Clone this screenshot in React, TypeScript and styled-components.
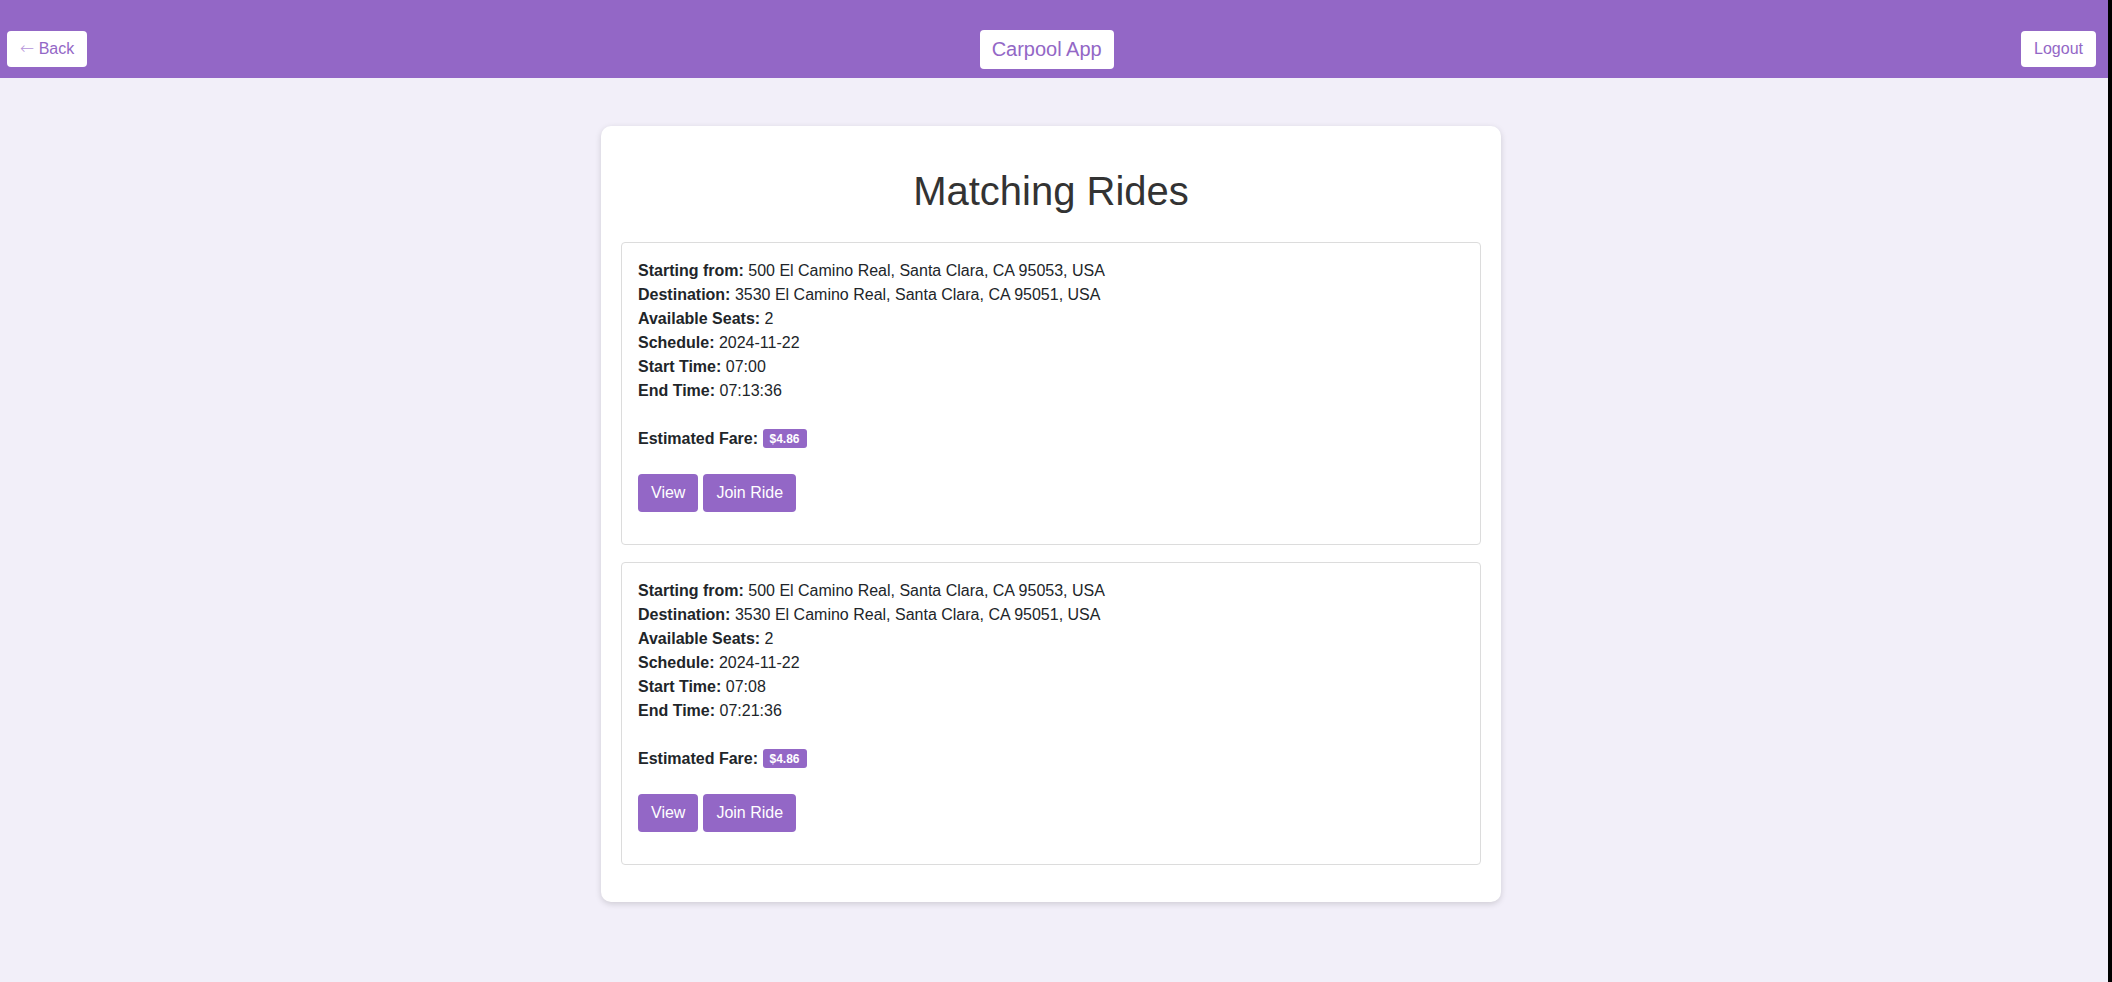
import React from "react";
import styled, { createGlobalStyle } from "styled-components";

const purple = "#9367c6";

// マッチした乗車
const rides = [
  {
    from: "500 El Camino Real, Santa Clara, CA 95053, USA",
    to: "3530 El Camino Real, Santa Clara, CA 95051, USA",
    seats: 2,
    schedule: "2024-11-22",
    start: "07:00",
    end: "07:13:36",
    fare: "$4.86",
  },
  {
    from: "500 El Camino Real, Santa Clara, CA 95053, USA",
    to: "3530 El Camino Real, Santa Clara, CA 95051, USA",
    seats: 2,
    schedule: "2024-11-22",
    start: "07:08",
    end: "07:21:36",
    fare: "$4.86",
  },
];

const GlobalStyle = createGlobalStyle`
  html, body {
    margin: 0;
    padding: 0;
    background: #000;
  }
  body {
    font-family: "Liberation Sans", Arial, sans-serif;
    color: #212529;
  }
`;

export default function App() {
  return (
    <>
      <GlobalStyle />
      <Page>
        <NavBar>
          <NavButton>
            <Arrow>←</Arrow> Back
          </NavButton>
          <BrandButton>Carpool App</BrandButton>
          <NavButton>Logout</NavButton>
        </NavBar>

        <Card>
          <Title>Matching Rides</Title>
          {rides.map((r, index) => (
            <RideCard key={index}>
              <Line>
                <b>Starting from:</b> {r.from}
              </Line>
              <Line>
                <b>Destination:</b> {r.to}
              </Line>
              <Line>
                <b>Available Seats:</b> {r.seats}
              </Line>
              <Line>
                <b>Schedule:</b> {r.schedule}
              </Line>
              <Line>
                <b>Start Time:</b> {r.start}
              </Line>
              <Line>
                <b>End Time:</b> {r.end}
              </Line>
              <Fare>
                <b>Estimated Fare:</b> <Badge>{r.fare}</Badge>
              </Fare>
              <ButtonRow>
                <ActionButton>View</ActionButton>
                <ActionButton>Join Ride</ActionButton>
              </ButtonRow>
            </RideCard>
          ))}
        </Card>
      </Page>
    </>
  );
}

const Page = styled.div`
  margin-right: 4px;
  min-height: 100vh;
  background: #f2eff9;
  padding-bottom: 40px;
  box-sizing: border-box;
`;

const NavBar = styled.nav`
  height: 78px;
  box-sizing: border-box;
  padding: 20px 12px 0 7px;
  background: ${purple};
  display: flex;
  align-items: center;
  justify-content: space-between;
`;

const NavButton = styled.button`
  background: #fff;
  color: ${purple};
  border: none;
  border-radius: 4px;
  font-family: "Liberation Sans", Arial, sans-serif;
  font-size: 16px;
  padding: 9px 13px;
  cursor: pointer;
`;

const Arrow = styled.span`
  font-family: "DejaVu Sans", sans-serif;
  font-size: 17px;
  line-height: 1;
  font-weight: 200;
  color: #b594da;
`;

const BrandButton = styled(NavButton)`
  font-size: 20px;
  padding: 8px 12px;
  margin-right: 15px;
`;

const Card = styled.div`
  width: 900px;
  box-sizing: border-box;
  margin: 48px 0 0 calc(50% - 453px);
  padding: 20px;
  background: #fff;
  border-radius: 10px;
  box-shadow: 0 2px 6px rgba(0, 0, 0, 0.15);
`;

const Title = styled.h1`
  margin: 23px 0 28px;
  text-align: center;
  font-size: 40px;
  font-weight: normal;
  color: #333;
`;

const RideCard = styled.div`
  border: 1px solid #dcdcdc;
  border-radius: 4px;
  padding: 16px;
  margin-bottom: 17px;
`;

const Line = styled.p`
  margin: 0;
  font-size: 16px;
  line-height: 24px;
`;

const Fare = styled(Line)`
  margin-top: 24px;
`;

const Badge = styled.span`
  display: inline-block;
  background: ${purple};
  color: #fff;
  font-size: 12px;
  font-weight: bold;
  line-height: 1;
  padding: 4px 7px 3px;
  border-radius: 3px;
  vertical-align: 1px;
`;

const ButtonRow = styled.div`
  display: flex;
  gap: 5px;
  margin: 23px 0 16px;
`;

const ActionButton = styled.button`
  background: ${purple};
  color: #fff;
  border: none;
  border-radius: 4px;
  font-family: "Liberation Sans", Arial, sans-serif;
  font-size: 16px;
  padding: 10px 13px;
  cursor: pointer;
`;
